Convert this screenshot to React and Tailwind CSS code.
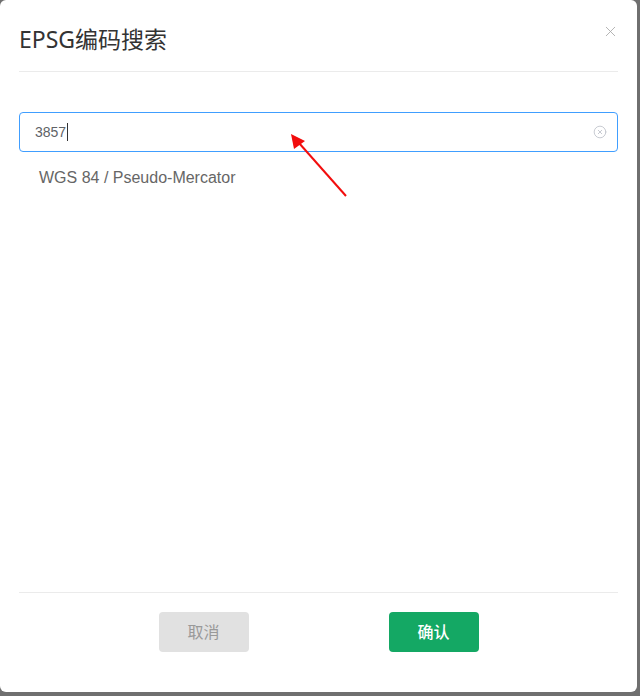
import React from "react";
import { X, CircleX } from "lucide-react";

const App = () => {
  return (
    <div className="w-[640px] h-[696px] bg-[#6f6f6f] overflow-hidden font-['Noto_Sans','Noto_Sans_CJK_SC',sans-serif]">
      {/* Dialog */}
      <div className="relative w-[637px] h-[692px] bg-white rounded-md flex flex-col">
        {/* Header */}
        <div className="mx-[19px] h-[72px] pt-[6px] border-b border-[#ebebeb] flex items-center justify-between">
          <h2 className="text-[23px] leading-8 text-[#333] font-['Noto_Sans','Noto_Sans_CJK_SC',sans-serif]">EPSG编码搜索</h2>
          <button className="text-[#a8a8a8] -mt-[14px] -mr-[1px]">
            <X size={17} strokeWidth={1.2} />
          </button>
        </div>

        {/* Body */}
        <div className="flex-1 px-[19px] pt-[40px]">
          <div className="h-10 border border-[#409eff] rounded flex items-center pl-[15px] pr-[10px]">
            <span className="flex-1 flex items-center text-sm text-[#606266] font-['Liberation_Sans',sans-serif]">
              3857
              <span className="w-px h-[18px] bg-[#333] ml-[1px]"></span>
            </span>
            <CircleX size={14} strokeWidth={1.5} className="text-[#c0c4cc]" />
          </div>
          <div className="mt-[14px] pl-5 text-base leading-6 text-[#666] font-['Liberation_Sans',sans-serif]">
            WGS 84 / Pseudo-Mercator
          </div>
        </div>

        {/* Footer */}
        <div className="mx-[19px] border-t border-[#ebebeb] pt-[19px] pb-[40px] flex justify-center gap-[140px]">
          <button className="w-[90px] h-10 rounded bg-[#e1e1e1] text-[#999] text-base">取消</button>
          <button className="w-[90px] h-10 rounded bg-[#14a864] text-white text-base font-medium">确认</button>
        </div>

        {/* Annotation arrow */}
        <svg className="absolute left-0 top-0 pointer-events-none" width="637" height="692">
          <line x1="346" y1="196" x2="299" y2="143" stroke="#f20d0d" strokeWidth="2" />
          <polygon points="291,134 305,141 294,149" fill="#f20d0d" />
        </svg>
      </div>
    </div>
  );
};

export default App;
